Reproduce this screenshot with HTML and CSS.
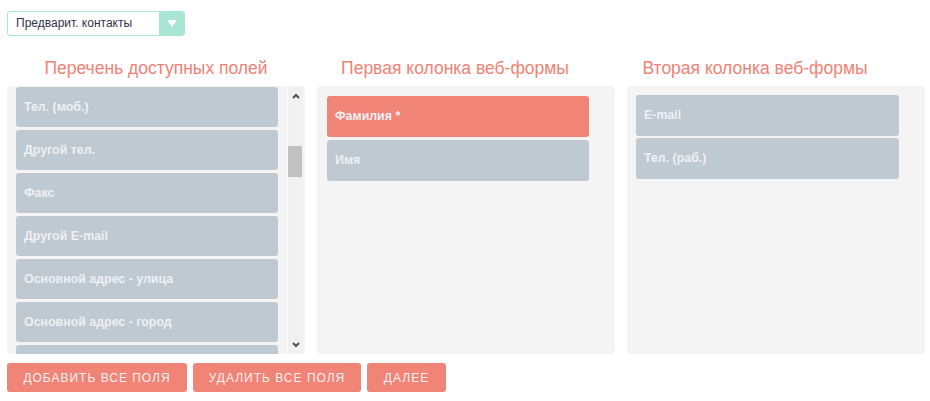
FILE: index.html
```html
<!DOCTYPE html>
<html lang="ru">
<head>
<meta charset="utf-8">
<link rel="stylesheet" href="styles.css">
</head>
<body>
<div class="select">
  <span class="select-text">Предварит. контакты</span>
  <span class="select-btn"><svg width="10" height="7" viewBox="0 0 10 7"><polygon points="0,0 10,0 5,7" fill="#fff"/></svg></span>
</div>
<div class="columns">
  <div class="col">
    <div class="title">Перечень доступных полей</div>
    <div class="panel panel-list">
      <div class="list">
        <div class="item">Тел. (моб.)</div>
        <div class="item">Другой тел.</div>
        <div class="item">Факс</div>
        <div class="item">Другой E-mail</div>
        <div class="item">Основной адрес - улица</div>
        <div class="item">Основной адрес - город</div>
        <div class="item">Основной адрес - область</div>
      </div>
      <div class="scrollbar">
        <span class="arrow"><svg width="8" height="6" viewBox="0 0 8 6"><polyline points="1,5 4,2 7,5" fill="none" stroke="#505050" stroke-width="2"/></svg></span>
        <div class="track"><div class="thumb"></div></div>
        <span class="arrow"><svg width="8" height="6" viewBox="0 0 8 6"><polyline points="1,1 4,4 7,1" fill="none" stroke="#505050" stroke-width="2"/></svg></span>
      </div>
    </div>
  </div>
  <div class="col">
    <div class="title title-2">Первая колонка веб-формы</div>
    <div class="panel panel-form">
      <div class="item item-req">Фамилия *</div>
      <div class="item">Имя</div>
    </div>
  </div>
  <div class="col">
    <div class="title title-3">Вторая колонка веб-формы</div>
    <div class="panel panel-form panel-3">
      <div class="item">E-mail</div>
      <div class="item">Тел. (раб.)</div>
    </div>
  </div>
</div>
<div class="buttons">
  <button class="btn btn-add">Добавить все поля</button>
  <button class="btn btn-del">Удалить все поля</button>
  <button class="btn btn-next">Далее</button>
</div>
</body>
</html>
```
FILE: styles.css
```css
html, body {
  margin: 0;
  background: #fff;
}
body {
  padding: 11px 0 0 7px;
  font-family: "Liberation Sans", Arial, sans-serif;
}
.select {
  width: 178px;
  height: 25px;
  box-sizing: border-box;
  border: 1px solid #a8e6d4;
  border-radius: 3px;
  display: flex;
  align-items: stretch;
  overflow: hidden;
}
.select-text {
  flex: 1;
  font-size: 12px;
  line-height: 23px;
  padding-left: 8px;
  color: #33334a;
}
.select-btn {
  width: 25px;
  background: #a8e6d4;
  display: flex;
  align-items: center;
  justify-content: center;
}
.columns {
  display: flex;
  gap: 12px;
  margin-top: 18px;
}
.col {
  flex: none;
  width: 298px;
  display: flex;
  flex-direction: column;
}
.title {
  font-size: 17.5px;
  line-height: 26px;
  height: 26px;
  margin-bottom: 6px;
  margin-top: 1px;
  color: #f08275;
  text-align: center;
  white-space: nowrap;
}
.title-2 { padding-right: 22px; }
.title-3 { padding-right: 42px; }
.panel {
  height: 268px;
  margin-top: -1px;
  background: #f4f4f4;
  border-radius: 4px;
  box-sizing: border-box;
}
.panel-list {
  display: flex;
  padding-left: 9px;
  padding-right: 2px;
}
.list {
  width: 263px;
  overflow: hidden;
  display: flex;
  flex-direction: column;
  gap: 3px;
  padding-top: 1px;
}
.item {
  flex: none;
  height: 40px;
  border-radius: 3px;
  background: #bfc9d1;
  color: #eef0f3;
  font-size: 12.4px;
  font-weight: bold;
  line-height: 40px;
  padding-left: 8px;
  box-sizing: border-box;
}
.item-req {
  background: #ef8477;
}
.scrollbar {
  margin-left: 9px;
  width: 15px;
  background: #f1f1f1;
  border-left: 1px solid #fafafa;
  display: flex;
  flex-direction: column;
  margin-top: 1px;
  margin-bottom: 1px;
}
.arrow {
  height: 17px;
  display: flex;
  align-items: center;
  justify-content: center;
}
.track {
  flex: 1;
  padding-top: 42px;
}
.thumb {
  width: 14px;
  height: 31px;
  background: #c1c1c1;
}
.panel-form {
  padding: 10px 26px 0 10px;
  display: flex;
  flex-direction: column;
  gap: 3px;
}
.panel-form .item {
  height: 41px;
  line-height: 41px;
}
.panel-3 {
  padding: 9px 26px 0 9px;
  gap: 2px;
}
.buttons {
  display: flex;
  gap: 6px;
  margin-top: 9px;
}
.btn {
  height: 29px;
  border: none;
  border-radius: 3px;
  background: #ef8477;
  color: #fdf0f0;
  font-family: "Liberation Sans", Arial, sans-serif;
  font-size: 12px;
  letter-spacing: 1px;
  text-transform: uppercase;
  padding: 0;
  white-space: nowrap;
}
.btn-add { width: 180px; }
.btn-del { width: 168px; }
.btn-next { width: 79px; }
```
